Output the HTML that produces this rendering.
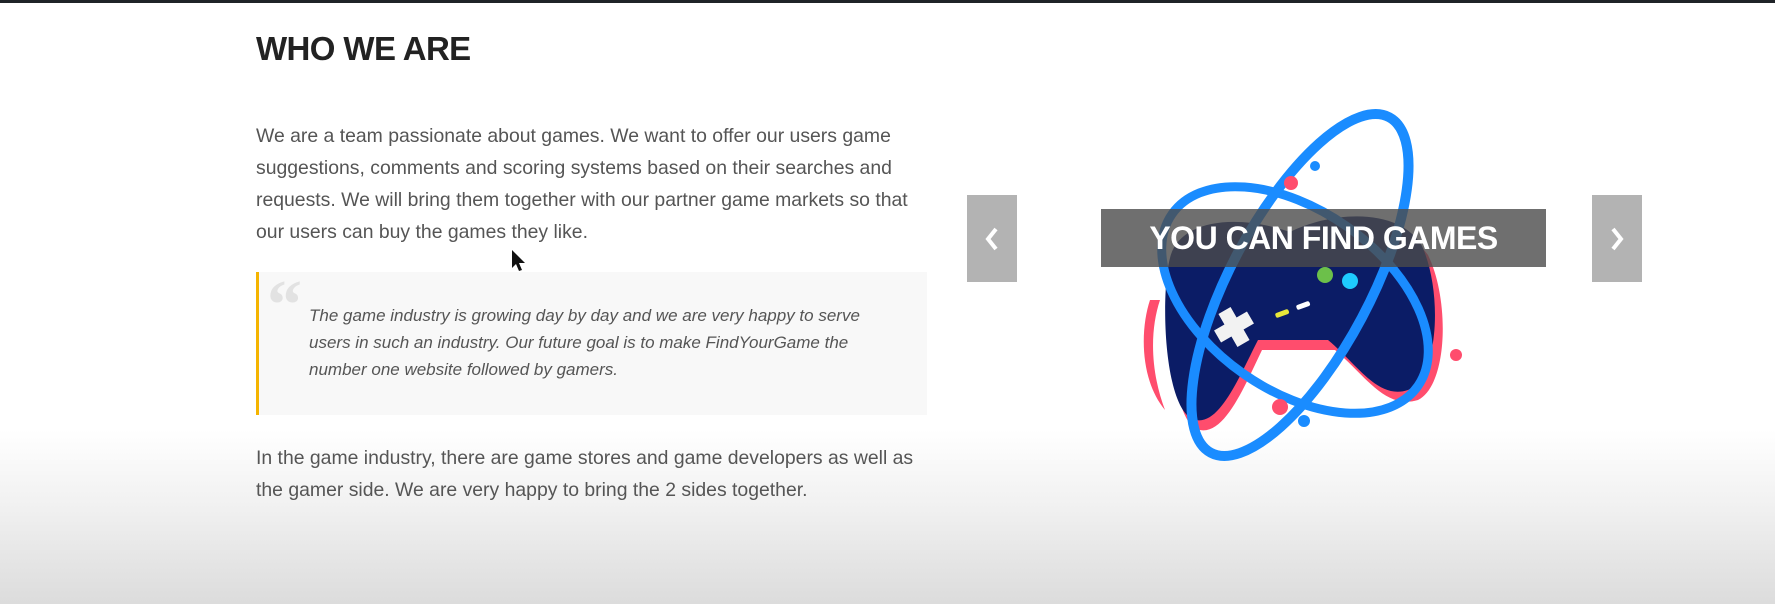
<!DOCTYPE html>
<html><head><meta charset="utf-8"><style>
html,body{margin:0;padding:0}
body{width:1775px;height:604px;position:relative;overflow:hidden;font-family:"Liberation Sans",sans-serif;
background:linear-gradient(to bottom,#fff 0,#fff 430px,#f2f2f2 500px,#dcdcdc 604px);}
.top{position:absolute;left:0;top:0;width:1775px;height:3px;background:#1f2328}
h1{position:absolute;left:256px;top:30px;margin:0;font-size:33px;font-weight:bold;color:#222;letter-spacing:-0.6px}
.p{position:absolute;left:256px;width:680px;font-size:19.4px;line-height:32px;color:#555}
.bq{position:absolute;left:256px;top:272px;width:671px;height:143px;background:#f8f8f8;border-left:3px solid #f5b400;box-sizing:border-box}
.bq .q{position:absolute;left:8px;top:-6px;font-size:70px;font-weight:bold;color:#e2e2e2;font-family:"Liberation Serif",serif}
.bq .t{position:absolute;left:50px;top:30px;width:560px;font-size:17px;line-height:27px;font-style:italic;color:#555}
.btn{position:absolute;top:195px;width:50px;height:87px;background:#b3b3b3}
.cap{position:absolute;left:1101px;top:209px;width:445px;height:58px;background:rgba(75,75,75,.8);color:#fff;font-weight:bold;font-size:32px;line-height:58px;text-align:center;letter-spacing:-0.5px}
</style></head><body>
<div class="top"></div>
<h1>WHO WE ARE</h1>
<div class="p" style="top:120px">We are a team passionate about games. We want to offer our users game suggestions, comments and scoring systems based on their searches and requests. We will bring them together with our partner game markets so that our users can buy the games they like.</div>
<div class="bq"><div class="q">“</div><div class="t">The game industry is growing day by day and we are very happy to serve users in such an industry. Our future goal is to make FindYourGame the number one website followed by gamers.</div></div>
<div class="p" style="top:442px">In the game industry, there are game stores and game developers as well as the gamer side. We are very happy to bring the 2 sides together.</div>
<svg style="position:absolute;left:0;top:0" width="1775" height="604">
<path d="M512,250 l0,18 l4,-4 l3,7 l3,-1 l-3,-7 l6,0 z" fill="#111"/>
<g>
<path d="M1150,300 C1140,330 1140,380 1165,410 C1150,370 1150,330 1160,300 Z" fill="#ff4d6d"/>
<path d="M1180,265 C1190,230 1240,220 1295,240 C1335,222 1400,215 1428,255 C1450,300 1448,385 1418,400 C1385,410 1365,375 1335,350 L1262,350 C1245,385 1225,435 1200,430 C1168,425 1168,300 1180,265 Z" fill="#ff4d6d"/>
<path d="M1170,258 C1178,222 1232,212 1290,232 C1330,212 1398,206 1422,246 C1442,290 1440,375 1408,390 C1378,400 1358,365 1328,340 L1258,340 C1240,375 1220,425 1196,420 C1164,415 1160,296 1170,258 Z" fill="#0b1c66"/>
<ellipse cx="1300" cy="285" rx="190" ry="70" transform="rotate(-62 1300 285)" fill="none" stroke="#1a8cff" stroke-width="10"/>
<ellipse cx="1295" cy="300" rx="150" ry="90" transform="rotate(35 1295 300)" fill="none" stroke="#1a8cff" stroke-width="9"/>
<path d="M1215,320 h12 v-12 h14 v12 h12 v14 h-12 v12 h-14 v-12 h-12 z" fill="#f2f2f2" transform="rotate(-30 1234 327)"/>
<circle cx="1325" cy="275" r="8" fill="#6cc04a"/><circle cx="1350" cy="281" r="8" fill="#1ecbff"/>
<rect x="1275" y="311" width="14" height="5" rx="2" fill="#e8e83a" transform="rotate(-20 1282 313)"/>
<rect x="1296" y="303" width="14" height="5" rx="2" fill="#fff" transform="rotate(-20 1303 305)"/>
<circle cx="1291" cy="183" r="7" fill="#ff4d6d"/><circle cx="1315" cy="166" r="5" fill="#1a8cff"/>
<circle cx="1280" cy="407" r="8" fill="#ff4d6d"/><circle cx="1304" cy="421" r="6" fill="#1a8cff"/>
<circle cx="1456" cy="355" r="6" fill="#ff4d6d"/>
</g>
</svg>
<div class="btn" style="left:967px"><svg width="50" height="87"><path d="M29,34 L21,44 L29,54" stroke="#fff" stroke-width="4" fill="none"/></svg></div>
<div class="btn" style="left:1592px"><svg width="50" height="87"><path d="M21,34 L29,44 L21,54" stroke="#fff" stroke-width="4" fill="none"/></svg></div>
<div class="cap">YOU CAN FIND GAMES</div>
</body></html>
